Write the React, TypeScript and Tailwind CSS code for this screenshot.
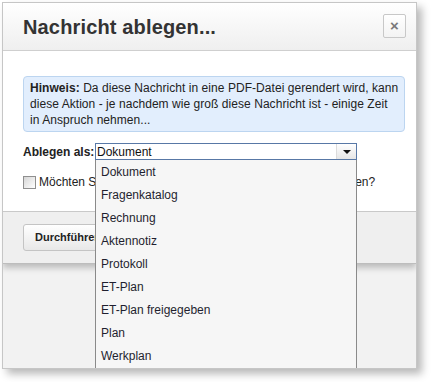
import React from "react";

const items = [
  "Dokument",
  "Fragenkatalog",
  "Rechnung",
  "Aktennotiz",
  "Protokoll",
  "ET-Plan",
  "ET-Plan freigegeben",
  "Plan",
  "Werkplan",
  "Zeichnung",
];

export default function App() {
  return (
    <div className="w-[431px] h-[382px] bg-white pt-[2px] pl-[2px] font-['Liberation_Sans'] text-[#222]">
      <div className="relative w-[415px] h-[367px] border border-[#c6c6c6] bg-[#f2f2f2] shadow-[5px_5px_8px_rgba(0,0,0,0.28)] overflow-hidden">
        <div className="bg-white border-b border-[#bdbdbd] shadow-[0_4px_6px_rgba(0,0,0,0.22)]">
          {/* header */}
          <div className="h-[48px] flex items-center justify-between pl-[20px] pr-[10px] bg-gradient-to-b from-white to-[#efefef] border-b border-[#cfcfcf]">
            <h1 className="text-[20px] font-bold text-[#333] leading-none mt-[1px] tracking-[0.15px]">Nachricht ablegen...</h1>
            <button className="w-[23px] h-[24px] mt-[-2px] border border-[#c8c8c8] rounded-[2px] bg-gradient-to-b from-white to-[#f3f3f3] flex items-center justify-center text-[#7a7a7a] text-[15px] font-bold leading-none">
              ×
            </button>
          </div>
          {/* body */}
          <div className="pl-[20px] pr-[11px] pt-[25px] pb-[22px]">
            <div className="border border-[#bcd5f0] bg-[#e2eefd] rounded-[4px] pl-[6px] pr-[3px] py-[3px] text-[12px] leading-[16px] tracking-[0.05px] text-[#222]">
              <b>Hinweis:</b> Da diese Nachricht in eine PDF-Datei gerendert wird, kann diese Aktion - je nachdem wie groß diese Nachricht ist - einige Zeit
              <br />
              in Anspruch nehmen...
            </div>
            <div className="flex items-center mt-[11px] h-[17px]">
              <span className="text-[12px] font-bold w-[72px] shrink-0 whitespace-nowrap">Ablegen als:</span>
              <div className="relative">
                <div className="w-[262px] h-[17px] border border-[#5878a6] bg-white flex items-center">
                  <span className="flex-1 pl-[1px] text-[12px] leading-none text-[#111]">Dokument</span>
                  <div className="w-[20px] h-[15px] border-l border-[#dcdcdc] bg-gradient-to-b from-white to-[#e6e6e6] flex items-center justify-center">
                    <svg width="8" height="4" viewBox="0 0 8 4"><path d="M0 0h8L4 4z" fill="#111" /></svg>
                  </div>
                </div>
                <div className="absolute left-0 top-[17px] w-[262px] bg-[#f6f6f6] border-x border-[#8a8a8a] z-10">
                  {items.map((it) => (
                    <div key={it} className="h-[23px] flex items-center pl-[5px] text-[12px] text-[#1f1f2f] whitespace-nowrap">
                      {it}
                    </div>
                  ))}
                </div>
              </div>
            </div>
            <div className="flex items-center mt-[15px] h-[14px]">
              <span className="w-[13px] h-[13px] shrink-0 border border-[#8f8f8f] bg-gradient-to-br from-[#d6d6d6] to-white" />
              <span className="ml-[3px] text-[12px] text-[#222] whitespace-nowrap">Möchten Sie diese Nachricht nach dem Ablegen auch löschen?</span>
            </div>
          </div>
          {/* footer */}
          <div className="h-[52px] bg-[#efefef] border-t border-[#c9c9c9] flex items-center px-[20px]">
            <button className="h-[27px] px-[11px] border border-[#c4c4c4] rounded-[3px] bg-gradient-to-b from-white to-[#e8e8e8] text-[11px] font-bold text-[#222]">
              Durchführen
            </button>
          </div>
        </div>
      </div>
    </div>
  );
}
